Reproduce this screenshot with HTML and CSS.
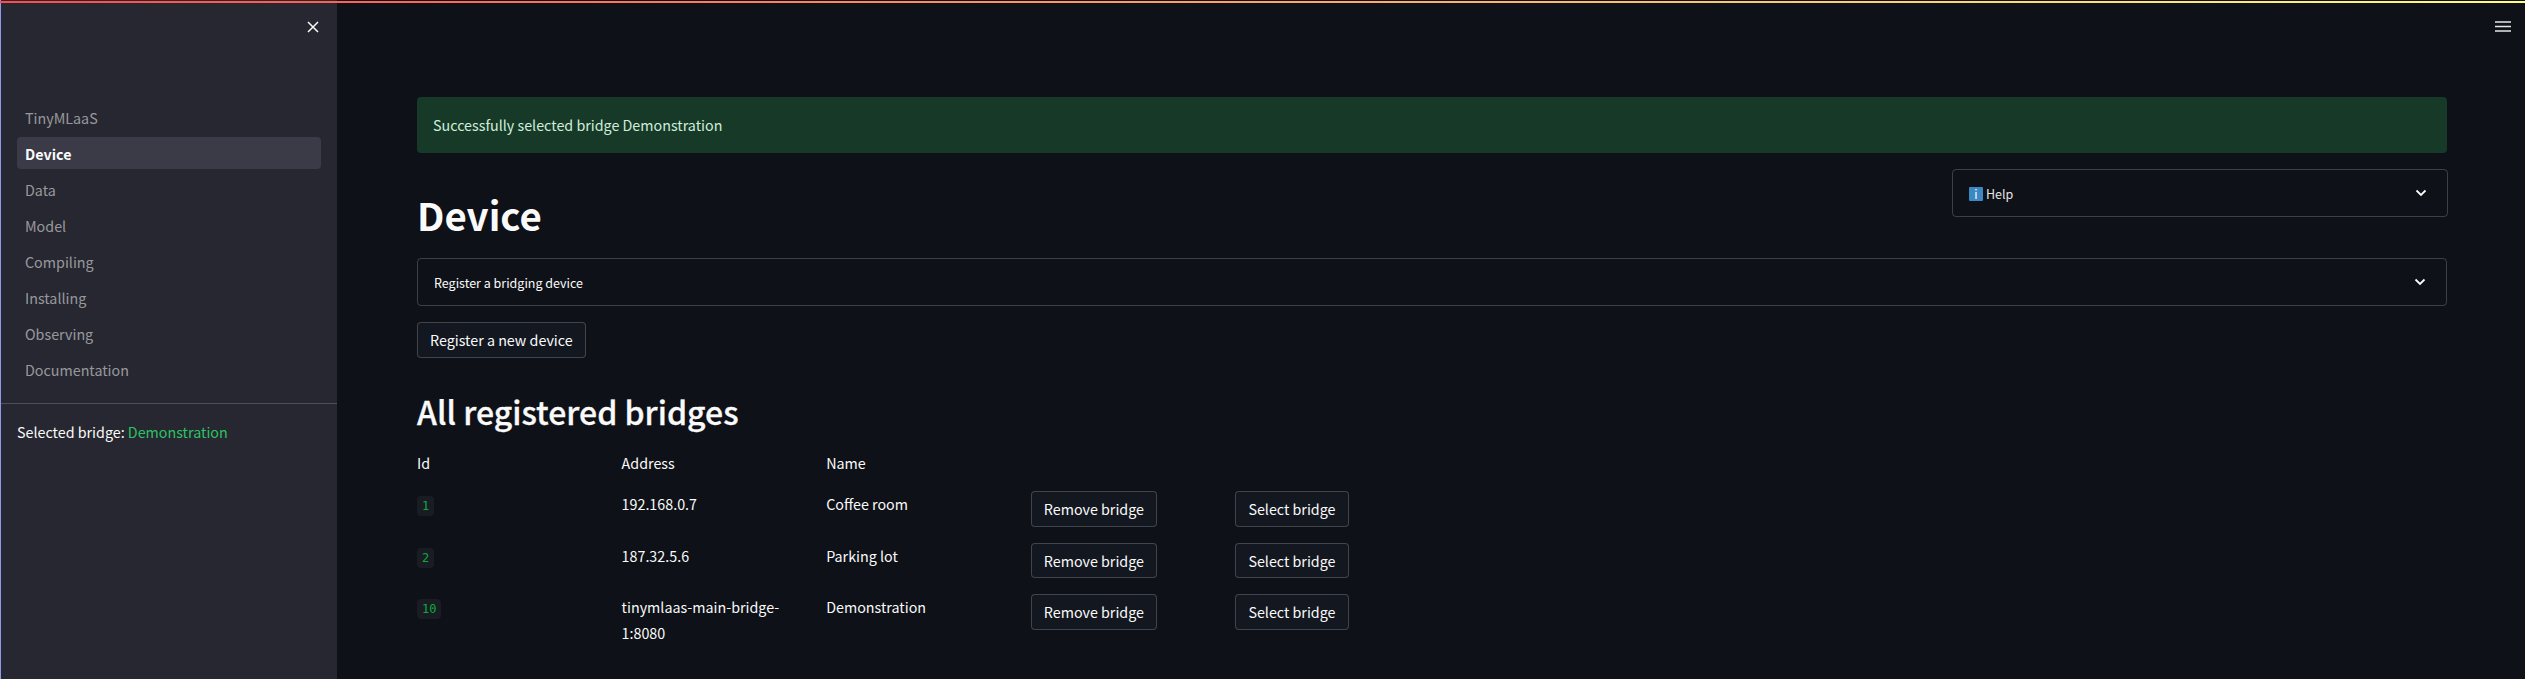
FILE: index.html
```html
<!DOCTYPE html>
<html>
<head>
    <title>Device - TinyMLaaS</title>
    <link rel="stylesheet" href="styles.css">
</head>
<body>
    <div class="top-line"></div>

    <aside class="sidebar">
        <button class="icon-btn close-btn" aria-label="Close sidebar">
            <svg width="12" height="12" viewBox="0 0 12 12"><path d="M1 1 11 11M11 1 1 11" stroke="#fafafa" stroke-width="1.5" fill="none"/></svg>
        </button>

        <nav class="nav">
            <a class="nav-item">TinyMLaaS</a>
            <a class="nav-item active">Device</a>
            <a class="nav-item">Data</a>
            <a class="nav-item">Model</a>
            <a class="nav-item">Compiling</a>
            <a class="nav-item">Installing</a>
            <a class="nav-item">Observing</a>
            <a class="nav-item">Documentation</a>
        </nav>

        <div class="selected">Selected bridge: <span class="green">Demonstration</span></div>
    </aside>

    <main class="main">
        <button class="icon-btn menu-btn" aria-label="Menu">
            <svg width="16" height="11" viewBox="0 0 16 11"><path d="M0 1h16M0 5.500h16M0 10h16" stroke="#e6e6e6" stroke-width="1.600" fill="none"/></svg>
        </button>

        <div class="alert">Successfully selected bridge Demonstration</div>

        <div class="title-row">
            <h1>Device</h1>
            <div class="expander help">
                <span class="help-label"><span class="info-icon">i</span>Help</span>
                <svg class="chevron" width="12" height="8" viewBox="0 0 12 8"><path d="M1.500 1.500 6 6l4.500-4.500" stroke="#fafafa" stroke-width="1.800" fill="none"/></svg>
            </div>
        </div>

        <div class="expander">
            <span class="expander-label">Register a bridging device</span>
            <svg class="chevron" width="12" height="8" viewBox="0 0 12 8"><path d="M1.500 1.500 6 6l4.500-4.500" stroke="#fafafa" stroke-width="1.800" fill="none"/></svg>
        </div>

        <div><button class="btn">Register a new device</button></div>

        <h2>All registered bridges</h2>

        <div class="bridges">
            <div class="bridge-row">
                <div>Id</div>
                <div>Address</div>
                <div>Name</div>
            </div>

            <div class="bridge-row">
                <div><code>1</code></div>
                <div>192.168.0.7</div>
                <div>Coffee room</div>
                <div><button class="btn">Remove bridge</button></div>
                <div><button class="btn">Select bridge</button></div>
            </div>

            <div class="bridge-row">
                <div><code>2</code></div>
                <div>187.32.5.6</div>
                <div>Parking lot</div>
                <div><button class="btn">Remove bridge</button></div>
                <div><button class="btn">Select bridge</button></div>
            </div>

            <div class="bridge-row">
                <div><code>10</code></div>
                <div>tinymlaas-main-bridge-1:8080</div>
                <div>Demonstration</div>
                <div><button class="btn">Remove bridge</button></div>
                <div><button class="btn">Select bridge</button></div>
            </div>
        </div>
    </main>
</body>
</html>
```
FILE: styles.css
```css
html, body {
    height: 100%;
}

body {
    display: flex;
    margin: 0;
    overflow: hidden;
    background-color: #0e1117;
    color: #fafafa;
    font-family: "Noto Sans CJK SC", "Noto Sans", sans-serif;
    font-size: 14.3px;
    line-height: 25.6px;
    border-left: 1px solid #8f9be8;
    box-sizing: border-box;
}

button {
    font: inherit;
    color: inherit;
}

/* gradient line along the top */
.top-line {
    position: absolute;
    top: 1px;
    left: 0;
    right: 0;
    height: 2px;
    background: linear-gradient(90deg, #ff4b4b, #fffd80);
}

.icon-btn {
    position: absolute;
    display: flex;
    padding: 0;
    border: 0;
    background: none;
}

/* Sidebar */
.sidebar {
    flex: 0 0 336px;
    box-sizing: border-box;
    padding-top: 101px;
    background-color: #262730;
}

.close-btn {
    top: 21px;
    left: 307px;
}

.nav {
    display: flex;
    flex-direction: column;
    gap: 4px;
    padding: 0 16px 18px;
    border-bottom: 1px solid rgba(250, 250, 250, 0.2);
}

.nav-item {
    height: 32px;
    padding: 0 8px;
    border-radius: 4px;
    color: rgba(250, 250, 250, 0.55);
    line-height: 33px;
}

.nav-item.active {
    background-color: #3a3b47;
    color: #fafafa;
    font-weight: 700;
}

.selected {
    padding: 15px 16px;
}

.green {
    color: #2dc364;
}

/* Main column */
.main {
    flex: 1;
    display: flex;
    flex-direction: column;
    gap: 16px;
    min-width: 0;
    padding: 97px 78px 0 80px;
}

.menu-btn {
    top: 21px;
    right: 14px;
}

.alert {
    height: 56px;
    padding: 0 16px;
    box-sizing: border-box;
    border-radius: 4px;
    background-color: #173928;
    color: #cfeedb;
    line-height: 56px;
}

.title-row {
    display: flex;
    justify-content: space-between;
    align-items: flex-start;
    height: 73px;
}

h1 {
    margin: 0;
    padding-top: 19px;
    font-size: 38.4px;
    font-weight: 700;
    line-height: 52px;
}

h2 {
    margin: 0;
    padding: 16px 0 1px;
    font-size: 32px;
    font-weight: 500;
    line-height: 43px;
    -webkit-text-stroke: 0.3px #fafafa;
}

.expander {
    display: flex;
    align-items: center;
    justify-content: space-between;
    height: 48px;
    padding: 0 20px 0 16px;
    box-sizing: border-box;
    border: 1px solid rgba(250, 250, 250, 0.2);
    border-radius: 4px;
    font-size: 12.5px;
}

.expander-label {
    padding-top: 1px;
}

.help {
    flex: 0 0 496px;
    margin-right: -1px;
}

.help-label {
    display: flex;
    align-items: center;
    gap: 3px;
    padding-top: 1px;
    color: #e4e4e4;
}

.info-icon {
    width: 14px;
    height: 14px;
    border-radius: 1px;
    background-color: #3b88c3;
    color: #fff;
    font-size: 12px;
    line-height: 14px;
    text-align: center;
}

.btn {
    padding: 4px 12px;
    border: 1px solid rgba(250, 250, 250, 0.2);
    border-radius: 4px;
    background-color: #13171f;
    line-height: 25.6px;
}

.bridges {
    display: flex;
    flex-direction: column;
    gap: 16px;
}

.bridge-row {
    display: grid;
    grid-template-columns: repeat(10, 1fr);
    gap: 16px;
}

code {
    padding: 3px 5px;
    border-radius: 4px;
    background-color: #1a1c24;
    color: #09ab3b;
    font-family: "DejaVu Sans Mono", monospace;
    font-size: 12px;
}
```
